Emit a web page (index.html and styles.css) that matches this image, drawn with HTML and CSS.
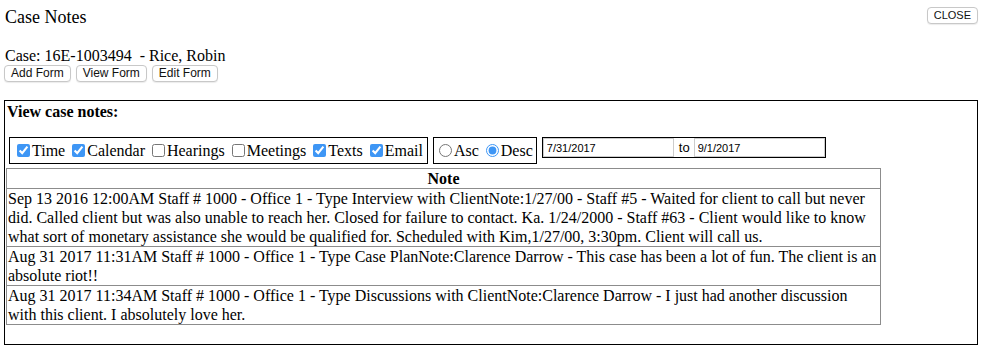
FILE: index.html
```html
<!DOCTYPE html>
<html lang="en">
<head>
<meta charset="UTF-8">
<title>Case Notes</title>
<link rel="stylesheet" href="styles.css">
</head>
<body>

<div class="topbar">
    <h2 class="title">Case Notes</h2>
    <button class="btn close-btn">CLOSE</button>
</div>

<div class="case-info">Case: 16E-1003494&nbsp; - Rice, Robin</div>
<div class="form-buttons">
    <button class="btn">Add Form</button>
    <button class="btn">View Form</button>
    <button class="btn">Edit Form</button>
</div>

<div class="notes-box">
    <div class="notes-heading">View case notes:</div>

    <div class="filters">
        <div class="filter-group type-group">
            <label><input type="checkbox" checked>Time</label>
            <label><input type="checkbox" checked>Calendar</label>
            <label><input type="checkbox">Hearings</label>
            <label><input type="checkbox">Meetings</label>
            <label><input type="checkbox" checked>Texts</label>
            <label><input type="checkbox" checked>Email</label>
        </div>
        <div class="filter-group order-group">
            <label><input type="radio" name="order">Asc</label>
            <label><input type="radio" name="order" checked>Desc</label>
        </div>
        <div class="date-group">
            <input type="text" class="date-input" value="7/31/2017">
            <span class="to">to</span>
            <input type="text" class="date-input" value="9/1/2017">
        </div>
    </div>

    <table class="notes-table">
        <tr><th>Note</th></tr>
        <tr><td>Sep 13 2016 12:00AM Staff # 1000 - Office 1 - Type Interview with ClientNote:1/27/00 - Staff #5 - Waited for client to call but never did. Called client but was also unable to reach her. Closed for failure to contact. Ka. 1/24/2000 - Staff #63 - Client would like to know what sort of monetary assistance she would be qualified for. Scheduled with Kim,1/27/00, 3:30pm. Client will call us.</td></tr>
        <tr><td>Aug 31 2017 11:31AM Staff # 1000 - Office 1 - Type Case PlanNote:Clarence Darrow - This case has been a lot of fun. The client is an absolute riot!!</td></tr>
        <tr><td>Aug 31 2017 11:34AM Staff # 1000 - Office 1 - Type Discussions with ClientNote:Clarence Darrow - I just had another discussion with this client. I absolutely love her.</td></tr>
    </table>
</div>

</body>
</html>
```

FILE: styles.css
```css
body {
    font-family: 'Liberation Serif', 'Times New Roman', serif;
    font-size: 16px;
    margin: 0;
    padding: 7px 7px 4px 4px;
    color: #000;
}

.topbar {
    display: flex;
    justify-content: space-between;
    align-items: flex-start;
}

.title {
    font-size: 18px;
    font-weight: normal;
    margin: 0 0 0 1px;
    line-height: 20px;
}

.btn {
    font-family: 'Liberation Sans', Arial, sans-serif;
    font-size: 12px;
    background: #fff;
    color: #111;
    border: 1px solid #c8c8c8;
    border-radius: 4px;
    padding: 0 6px;
    height: 17px;
    line-height: 15px;
    box-shadow: 0 1px 1px rgba(0, 0, 0, 0.08);
}

.close-btn {
    font-size: 11px;
    padding: 0 6px;
}

.case-info {
    margin: 19px 0 0 1px;
    line-height: 19px;
}

.form-buttons {
    display: flex;
    gap: 5px;
}

.notes-box {
    margin-top: 18px;
    border: 1px solid #000;
    height: 242px;
    padding: 1px 0 0 1px;
}

.notes-heading {
    font-weight: bold;
    line-height: 19px;
    margin-left: 1px;
}

.filters {
    display: flex;
    align-items: flex-start;
    gap: 5px;
    margin: 16px 0 0 3px;
}

.filter-group {
    border: 1px solid #000;
    height: 25px;
    display: flex;
    align-items: center;
    padding: 0 4px 0 3px;
    gap: 3px;
}

.order-group {
    padding: 0 3px 0 1px;
}

.filter-group label {
    display: flex;
    align-items: center;
}

.filter-group input {
    margin: 0 2px 0 4px;
    width: 13px;
    height: 13px;
    accent-color: #3e96f5;
}

.date-group {
    display: flex;
    align-items: center;
    border: 1px solid #000;
    height: 19px;
}

.date-input {
    font-family: 'Liberation Sans', Arial, sans-serif;
    font-size: 11px;
    width: 131px;
    height: 19px;
    box-sizing: border-box;
    border: 1px solid #ccc;
    padding: 0 3px;
    margin: 0;
}

.to {
    font-family: 'Liberation Sans', Arial, sans-serif;
    font-size: 13px;
    padding: 0 4px 0 5px;
}

.notes-table {
    border-collapse: collapse;
    width: 875px;
    margin-top: 4px;
    border: 1px solid #8c8c8c;
}

.notes-table th,
.notes-table td {
    border: 1px solid #8c8c8c;
    padding: 0 1px;
    line-height: 19px;
    text-align: left;
    vertical-align: top;
}

.notes-table th {
    text-align: center;
}

.notes-table td {
    height: 37px;
}
```
